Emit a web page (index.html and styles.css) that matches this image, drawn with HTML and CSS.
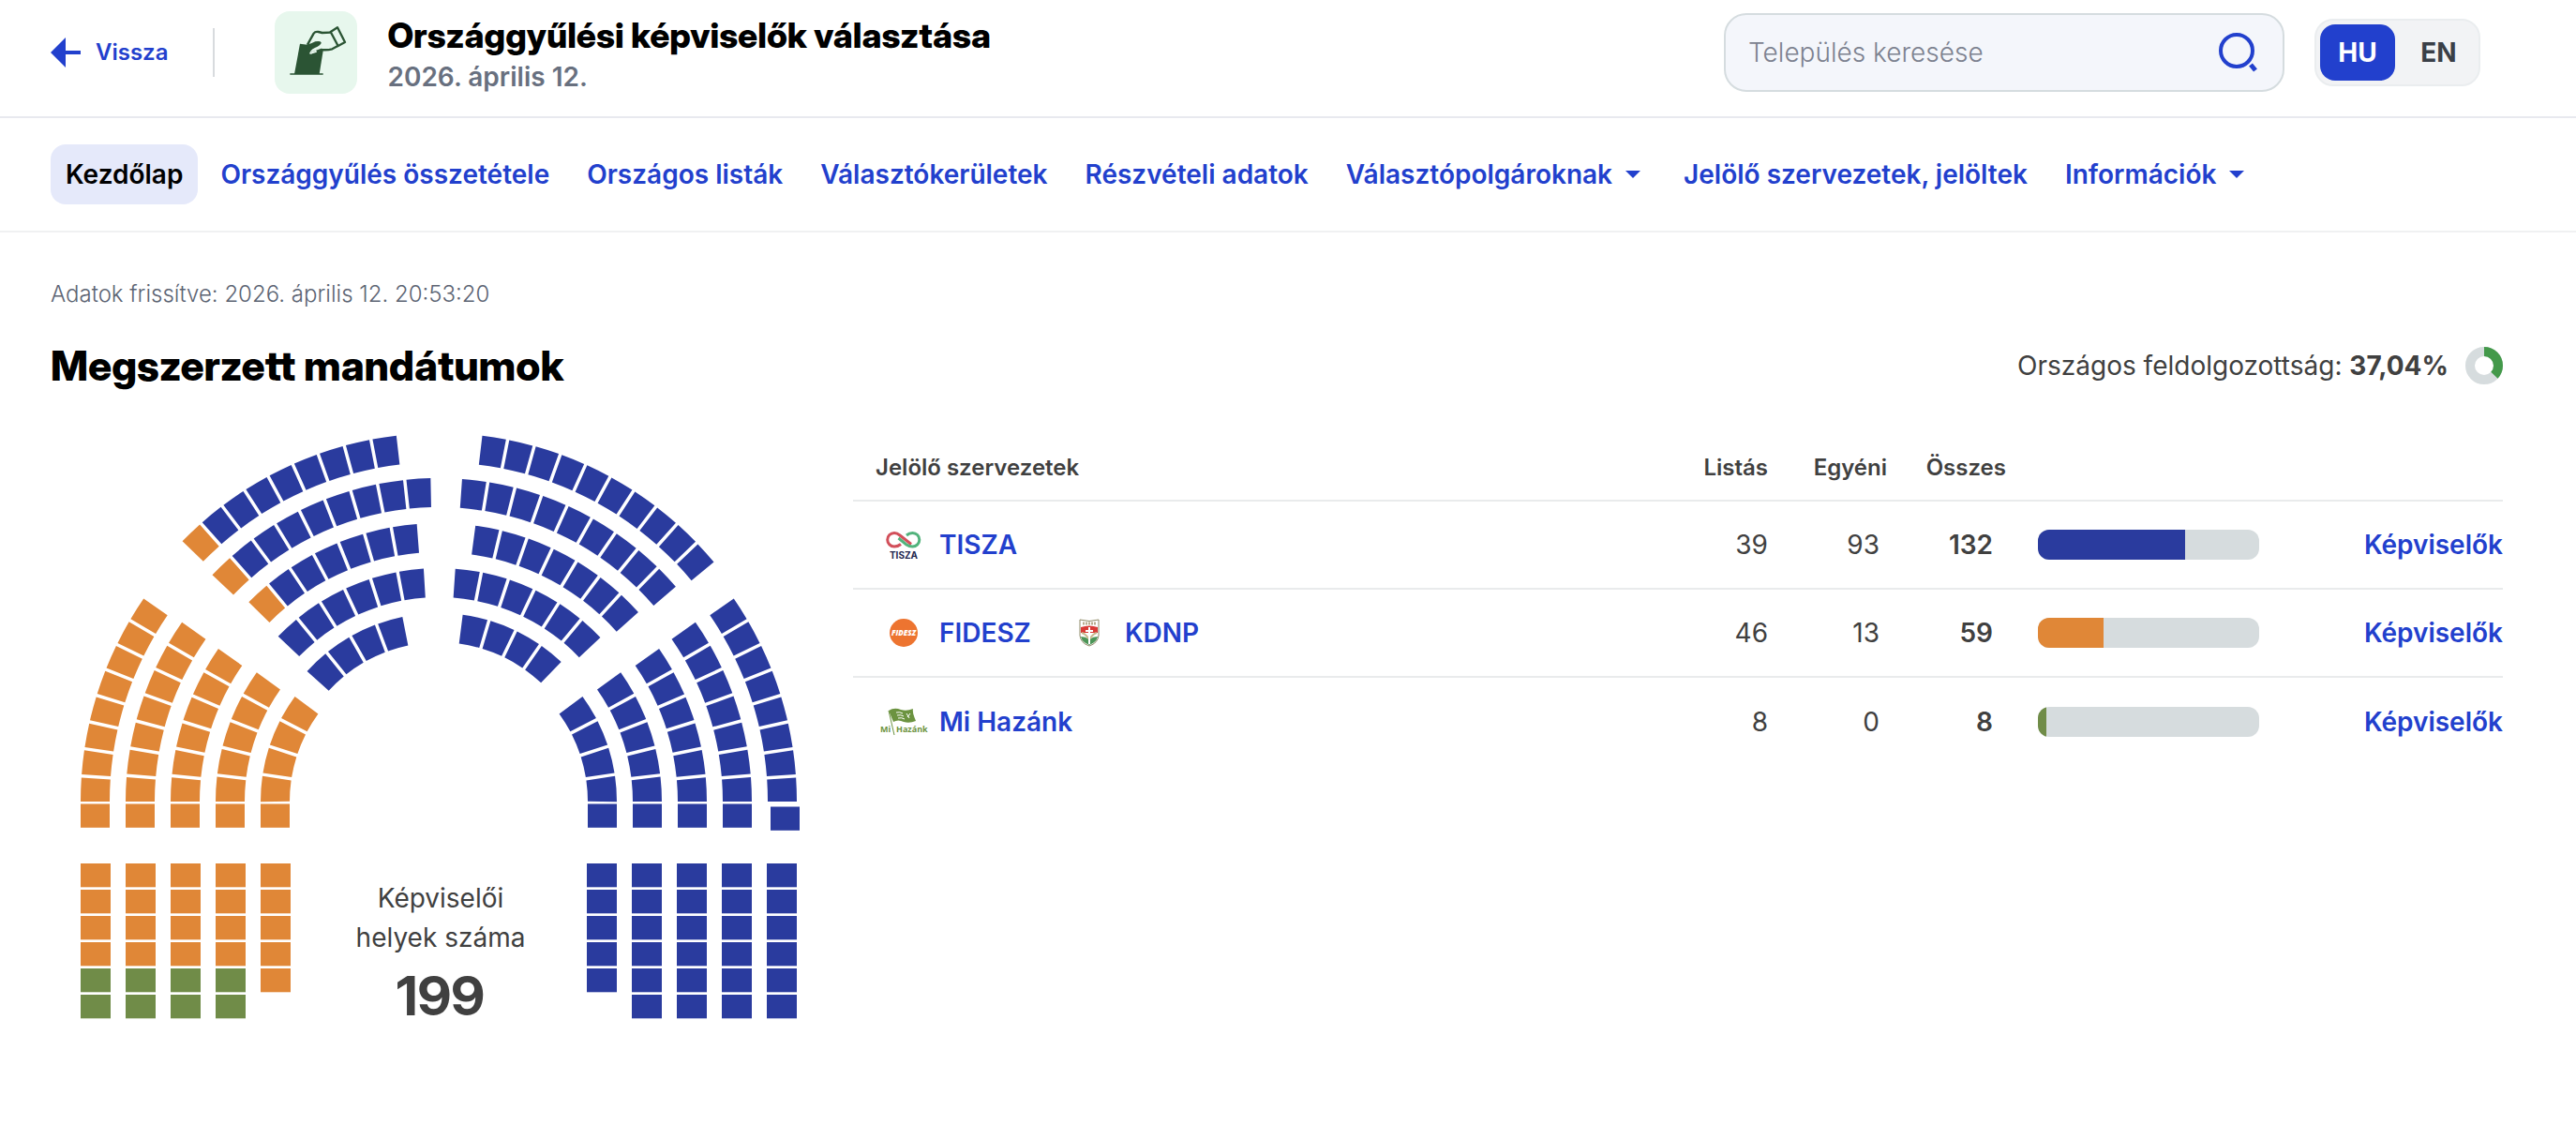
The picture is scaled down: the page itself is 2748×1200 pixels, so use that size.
FILE: index.html
```html
<!DOCTYPE html>
<html lang="hu">
<head>
  <meta charset="UTF-8" />
  <meta name="viewport" content="width=device-width, initial-scale=1.0"/>
  <title>Országgyűlési képviselők választása</title>
  <link rel="stylesheet" href="styles.css">
</head>
<body>

  <header class="header">
    <a class="back" href="#">
      <svg width="32" height="32" viewBox="0 0 32 32" aria-hidden="true">
        <path d="M0 16 16 0v14h16v4H16v14z" fill="currentColor"/>
      </svg>
      Vissza
    </a>
    <div class="brand">
      <div class="brand-icon">
        <svg width="88" height="88" viewBox="0 0 264 264" aria-hidden="true">
          <path d="M81 104l24 3 50 20-12 74H63z" fill="#2b5434"/>
          <path d="M49 201h106" stroke="#2b5434" stroke-width="5"/>
          <path d="M104 108l20-37q6-9 18-6l36 3 24 43-18 10-28 2q-18 3-40 14z" fill="#e7f7ed"/>
          <path d="M105 107l20-36q5-7 15-5l12 3 27-1M116 132q8 1 16-3l16-6q20 2 36-2l18-10" fill="none" stroke="#2b5434" stroke-width="7" stroke-linejoin="round"/>
          <path d="M112 134q8-2 22-6" fill="none" stroke="#e7f7ed" stroke-width="6"/>
          <path d="M179 66l22-14 24 47-22 12z" fill="#e7f7ed" stroke="#2b5434" stroke-width="7" stroke-linejoin="round"/>
          <path d="M102 107q16-3 28-10 16-3 19 3 1 6-12 13-18 6-25 19l-12-2z" fill="#2b5434"/>
        </svg>
      </div>
      <div class="brand-text">
        <h1 class="brand-title">Országgyűlési képviselők választása</h1>
        <p class="brand-date">2026. április 12.</p>
      </div>
    </div>
    <form class="search" role="search">
      <input type="text" class="search-input" aria-label="Település keresése" placeholder="Település keresése" />
      <button type="button" class="search-button" aria-label="Keresés">
        <svg width="44" height="44" viewBox="0 0 44 44" fill="none" stroke="currentColor" stroke-width="4" aria-hidden="true">
          <circle cx="19" cy="20" r="17"/>
          <path d="M34 35l5 6" stroke-width="5"/>
        </svg>
      </button>
    </form>
    <div class="lang">
      <button type="button" class="lang-button active">HU</button>
      <button type="button" class="lang-button">EN</button>
    </div>
  </header>

  <nav class="nav">
    <a class="nav-link active" href="#">Kezdőlap</a>
    <a class="nav-link" href="#">Országgyűlés összetétele</a>
    <a class="nav-link" href="#">Országos listák</a>
    <a class="nav-link" href="#">Választókerületek</a>
    <a class="nav-link" href="#">Részvételi adatok</a>
    <a class="nav-link dropdown" href="#">Választópolgároknak</a>
    <a class="nav-link" href="#">Jelölő szervezetek, jelöltek</a>
    <a class="nav-link dropdown" href="#">Információk</a>
  </nav>

  <main class="main">
    <p class="updated">Adatok frissítve: 2026. április 12. 20:53:20</p>

    <div class="title-row">
      <h2 class="title">Megszerzett mandátumok</h2>
      <div class="progress">
        <span>Országos feldolgozottság: <strong>37,04%</strong></span>
        <svg width="40" height="40" viewBox="0 0 40 40" fill="none" stroke-width="10" aria-hidden="true">
          <circle cx="20" cy="20" r="15" stroke="#d6dcde"/>
          <circle cx="20" cy="20" r="15" stroke="#43994a" pathLength="100" stroke-dasharray="37.04 100" transform="rotate(-90 20 20)"/>
        </svg>
      </div>
    </div>

    <div class="content">
      <svg class="parliament" viewBox="0 0 816 650" role="img" aria-label="Képviselői helyek">
        <g id="seats"></g>
        <text class="seats-label" x="416" y="518">Képviselői</text>
        <text class="seats-label" x="416" y="560">helyek száma</text>
        <text class="seats-total" x="416" y="633">199</text>
      </svg>

      <table class="results">
        <thead>
          <tr>
            <th class="col-party">Jelölő szervezetek</th>
            <th class="col-num">Listás</th>
            <th class="col-num">Egyéni</th>
            <th class="col-num">Összes</th>
            <th class="col-bar"></th>
            <th class="col-link"></th>
          </tr>
        </thead>
        <tbody>
          <tr>
            <td>
              <div class="parties">
                <a class="party" href="#">
                  <svg width="52" height="36" viewBox="0 0 52 36" aria-hidden="true">
                    <g fill="none" stroke-width="3">
                      <path d="M23 17.5Q20 20 16 20A7.3 7.3 0 1 1 16 5.4Q19 5.4 22 8L34 17.5" stroke="#d24f5a"/>
                      <path d="M20.5 11l8.5 7Q32 20 35.5 20A7.3 7.3 0 1 0 35.5 5.4Q32 5.4 29 8" stroke="#52b37c"/>
                    </g>
                    <text class="logo-tisza" x="26" y="33">TISZA</text>
                  </svg>
                  TISZA
                </a>
              </div>
            </td>
            <td class="listas">39</td>
            <td class="egyeni">93</td>
            <td class="osszes">132</td>
            <td><div class="bar"><div class="bar-fill tisza" style="width: 66.33%"></div></div></td>
            <td class="members"><a href="#">Képviselők</a></td>
          </tr>
          <tr>
            <td>
              <div class="parties">
                <a class="party" href="#">
                  <svg width="52" height="36" viewBox="0 0 52 36" aria-hidden="true">
                    <circle cx="26" cy="18" r="15" fill="#ed7430"/>
                    <text class="logo-fidesz" x="26" y="21">FIDESZ</text>
                  </svg>
                  FIDESZ
                </a>
                <a class="party" href="#">
                  <svg width="52" height="36" viewBox="0 0 52 36" aria-hidden="true">
                    <path d="M16 4q10 3 20 0v17q-1 8-10 11-9-3-10-11z" fill="#fff"/>
                    <path d="M17 12q9-3 18 0v6H17z" fill="#d93a36"/>
                    <path d="M17 22q5 0 9 3 4-3 9-3-1 6-9 9-8-3-9-9z" fill="#4c9557"/>
                    <path d="M18 18q4 1 7 6M34 18q-4 1-7 6" fill="none" stroke="#c9b98d" stroke-width="2"/>
                    <path d="M26 12v18M22 16h8" stroke="#fff" stroke-width="2"/>
                    <path d="M19 8h14" stroke="#b9ac8e" stroke-width="3" stroke-dasharray="2 1"/>
                    <path d="M16 4q10 3 20 0v17q-1 8-10 11-9-3-10-11z" fill="none" stroke="#8f8a68"/>
                  </svg>
                  KDNP
                </a>
              </div>
            </td>
            <td class="listas">46</td>
            <td class="egyeni">13</td>
            <td class="osszes">59</td>
            <td><div class="bar"><div class="bar-fill fidesz" style="width: 29.65%"></div></div></td>
            <td class="members"><a href="#">Képviselők</a></td>
          </tr>
          <tr>
            <td>
              <div class="parties">
                <a class="party" href="#">
                  <svg width="52" height="36" viewBox="0 0 52 36" aria-hidden="true">
                    <path d="M10 6q6-4 13-1 6 2 13-1-1 4 3 13-7 3-13 1-6-3-11 0z" fill="#6c9340"/>
                    <path d="M18 8q4-1 7 1M19 11q4-1 7 1M20 14q4-1 7 1M29 9l3 5M33 9l-3 4" fill="none" stroke="#fff"/>
                    <path d="M10 6l6 26" stroke="#6c9340"/>
                    <text class="logo-hazank" x="1" y="29">Mi</text>
                    <text class="logo-hazank" x="18" y="29">Hazánk</text>
                  </svg>
                  Mi Hazánk
                </a>
              </div>
            </td>
            <td class="listas">8</td>
            <td class="egyeni">0</td>
            <td class="osszes">8</td>
            <td><div class="bar"><div class="bar-fill hazank" style="width: 4.02%"></div></div></td>
            <td class="members"><a href="#">Képviselők</a></td>
          </tr>
        </tbody>
      </table>
    </div>
  </main>

  <script src="script.js"></script>
</body>
</html>
```

FILE: styles.css
```css
* {
  box-sizing: border-box;
}

body {
  margin: 0;
  font-family: Inter, "Liberation Sans", sans-serif;
  font-size: 28px;
  line-height: 40px;
  background-color: #ffffff;
  color: #404040;
}

a {
  color: #2240cd;
  font-weight: 600;
  text-decoration: none;
}

button {
  border: none;
  background: none;
  padding: 0;
  font: inherit;
  cursor: pointer;
}

h1, h2, p {
  margin: 0;
}

svg {
  flex-shrink: 0;
}

.header {
  display: flex;
  align-items: center;
  padding: 12px 102px 24px 54px;
  border-bottom: 2px solid #e8e9ef;
}

.back {
  display: flex;
  align-items: center;
  gap: 16px;
  height: 52px;
  padding-right: 48px;
  border-right: 2px solid #d8dbde;
  font-size: 24px;
}

.brand {
  display: flex;
  align-items: center;
  gap: 32px;
  flex: 1;
  padding-left: 64px;
}

.brand-icon {
  height: 88px;
  border-radius: 16px;
  background-color: #e7f7ed;
}

.brand-text {
  display: flex;
  flex-direction: column;
  gap: 4px;
  padding-top: 4px;
}

.brand-title {
  font-family: "Inter Display", Inter, "Liberation Sans", sans-serif;
  font-size: 37px;
  line-height: 44px;
  font-weight: 800;
  color: #000;
}

.brand-date {
  line-height: 36px;
  font-weight: 600;
  color: #68707f;
}

.search {
  display: flex;
  align-items: center;
  width: 598px;
  height: 84px;
  padding: 0 24px;
  border: 2px solid #d5dcdf;
  border-radius: 24px;
  background-color: #f4f6fb;
}

.search-input {
  flex: 1;
  min-width: 0;
  padding: 0;
  border: none;
  outline: none;
  background: none;
  font: inherit;
}

.search-input::placeholder {
  color: #7d8290;
  font-weight: 300;
  opacity: 1;
}

.search-button {
  height: 44px;
  color: #2240cd;
}

.lang {
  display: flex;
  margin-left: 32px;
  padding: 4px;
  border: 2px solid #eaedef;
  border-radius: 20px;
  background-color: #f2f3f5;
}

.lang-button {
  width: 80px;
  height: 60px;
  border-radius: 16px;
  font-weight: 700;
  color: #3a3f47;
}

.lang-button + .lang-button {
  width: 85px;
  padding-left: 8px;
}

.lang-button.active {
  background-color: #2240cd;
  color: #fff;
}

.nav {
  display: flex;
  gap: 8px;
  padding: 28px 54px;
  border-bottom: 2px solid #f0f1f2;
}

.nav-link {
  display: flex;
  align-items: center;
  height: 64px;
  padding: 0 16px;
  border-radius: 16px;
  white-space: nowrap;
}

.nav-link.active {
  background-color: #e5e9fa;
  color: #000;
}

.nav-link.dropdown {
  padding-right: 22px;
}

.nav-link.dropdown::after {
  content: "";
  margin-left: 14px;
  border: 8px solid transparent;
  border-top-color: currentColor;
  border-bottom: none;
}

.main {
  padding: 46px 78px 48px 54px;
}

.updated {
  font-size: 24px;
  font-weight: 300;
  color: #5c6473;
}

.title-row {
  display: flex;
  align-items: center;
  justify-content: space-between;
  margin-top: 28px;
}

.title {
  font-family: "Inter Display", Inter, "Liberation Sans", sans-serif;
  font-size: 44px;
  line-height: 56px;
  font-weight: 800;
  color: #000;
}

.progress {
  display: flex;
  align-items: center;
  gap: 18px;
}

.progress strong {
  font-weight: 700;
}

.content {
  display: flex;
  align-items: flex-start;
  gap: 40px;
  margin-top: 32px;
}

.parliament {
  width: 816px;
}

.seats-label {
  font-size: 28px;
  text-anchor: middle;
  fill: #404040;
}

.seats-total {
  font-family: "Inter Display", Inter, "Liberation Sans", sans-serif;
  font-size: 58px;
  font-weight: 700;
  text-anchor: middle;
  fill: #404040;
}

.results {
  flex: 1;
  margin-top: 14px;
  border-collapse: collapse;
  table-layout: fixed;
}

.results th {
  height: 70px;
  padding: 0 16px 0 0;
  font-size: 24px;
  font-weight: 600;
  text-align: right;
}

.results th.col-party {
  padding-left: 24px;
  text-align: left;
}

.col-num {
  width: 127px;
}

.col-bar {
  width: 275px;
}

.col-link {
  width: 239px;
}

.results td {
  height: 94px;
  padding: 0;
}

.results tbody tr {
  border-top: 2px solid #e9ebec;
}

.parties {
  display: flex;
  gap: 36px;
  padding-left: 28px;
}

.party {
  display: flex;
  align-items: center;
  gap: 12px;
}

.logo-tisza {
  font-size: 10px;
  font-weight: 700;
  text-anchor: middle;
  fill: #23284f;
}

.logo-fidesz {
  font-family: "Open Sans", sans-serif;
  font-size: 8px;
  font-style: italic;
  font-weight: 800;
  text-anchor: middle;
  fill: #fff;
}

.logo-hazank {
  font-family: "Open Sans", sans-serif;
  font-size: 9px;
  font-weight: 700;
  fill: #6c9340;
}

.results .listas,
.results .egyeni,
.results .osszes {
  text-align: right;
}

.results .listas {
  padding-right: 16px;
}

.results .egyeni {
  padding-right: 24px;
}

.results .osszes {
  padding-right: 30px;
  font-weight: 600;
}

.bar {
  width: 236px;
  height: 32px;
  margin-left: 18px;
  border-radius: 12px;
  background-color: #d6dcde;
  overflow: hidden;
}

.bar-fill {
  height: 100%;
}

.members {
  text-align: right;
}

.tisza {
  background-color: #2a3b9e;
  fill: #2a3b9e;
}

.fidesz {
  background-color: #e08737;
  fill: #e08737;
}

.hazank {
  background-color: #708c48;
  fill: #708c48;
}
```

FILE: script.js
```js
const seats = document.getElementById('seats');
const CX = 414;
const TOP_Y = 394;
const SIDE_Y = 405;
const DEPTH = 31;
const GAP = 3.5;

// radius: outer edge of the row, angles in degrees measured from the horizontal
const rows = [
  { radius: 382, side: [8, 34.5], left: [9, 44.3, 83.2], right: [10, 39.8, 83] },
  { radius: 334, side: [7, 34.9], left: [9, 43.7, 88.5], right: [9, 40.8, 85.7] },
  { radius: 286, side: [6, 34.7], left: [7, 44.9, 85.3], right: [7, 41.9, 82.1] },
  { radius: 238, side: [5, 35.3], left: [6, 44, 86.1], right: [6, 43.6, 85.7] },
  { radius: 190, side: [4, 36.1], left: [4, 42.4, 78.2], right: [4, 46.6, 82.2] }
];

function addShape(name, attrs, party) {
  const el = document.createElementNS('http://www.w3.org/2000/svg', name);
  Object.keys(attrs).forEach((key) => el.setAttribute(key, attrs[key]));
  el.setAttribute('class', party);
  seats.appendChild(el);
}

function addRect(x, y, width, party) {
  addShape('rect', { x: x, y: y, width: width, height: 25.3 }, party);
}

// dir is -1 for the left half and 1 for the right half
function addArc(cy, dir, radius, count, from, to, partyOf) {
  const inner = radius - DEPTH;
  const mid = radius - DEPTH / 2;
  const start = from * Math.PI / 180;
  const end = to * Math.PI / 180;
  const step = (end - start + GAP / mid) / count;

  function point(r, angle) {
    return (CX + dir * r * Math.cos(angle)).toFixed(2) + ' ' + (cy - r * Math.sin(angle)).toFixed(2);
  }

  for (let i = 0; i < count; i++) {
    const a = start - GAP / 2 / mid + i * step;
    const b = a + step;
    const outerGap = GAP / 2 / radius;
    const innerGap = GAP / 2 / inner;
    const d = 'M' + point(radius, a + outerGap) +
      'A' + radius + ' ' + radius + ' 0 0 ' + (dir < 0 ? 1 : 0) + ' ' + point(radius, b - outerGap) +
      'L' + point(inner, b - innerGap) +
      'A' + inner + ' ' + inner + ' 0 0 ' + (dir < 0 ? 0 : 1) + ' ' + point(inner, a + innerGap) + 'Z';
    addShape('path', { d: d }, partyOf(i));
  }
}

rows.forEach((row, index) => {
  const leftX = 32 + index * 48;
  const rightX = 765 - index * 48;

  addArc(SIDE_Y, -1, row.radius, row.side[0], 0, row.side[1], () => 'fidesz');
  addArc(SIDE_Y, 1, row.radius, row.side[0], 0, row.side[1], () => 'tisza');
  addArc(TOP_Y, -1, row.radius, row.left[0], row.left[1], row.left[2], (i) => (i === 0 && index < 3 ? 'fidesz' : 'tisza'));
  addArc(TOP_Y, 1, row.radius, row.right[0], row.right[1], row.right[2], () => 'tisza');

  addRect(leftX, 407.5, 31, 'fidesz');
  addRect(index === 0 ? 768 : rightX, index === 0 ? 410.5 : 407.5, 31, 'tisza');

  // straight benches at the bottom, the innermost ones are a seat shorter
  const length = index === 4 ? 5 : 6;
  for (let i = 0; i < length; i++) {
    addRect(leftX, 471 + i * 28, 32, i > 3 && index < 4 ? 'hazank' : 'fidesz');
    addRect(rightX - 1, 471 + i * 28, 32, 'tisza');
  }
});
```
